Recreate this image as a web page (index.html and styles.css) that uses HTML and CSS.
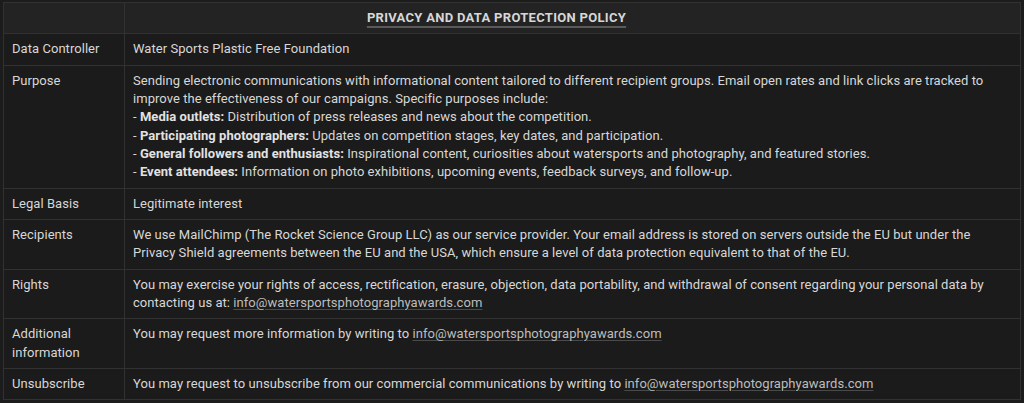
FILE: index.html
```html
<!DOCTYPE html>
<html lang="en">
<head>
<meta charset="utf-8">
<title>Privacy and Data Protection Policy</title>
<link rel="stylesheet" href="styles.css">
</head>
<body>
<table class="policy">
  <thead>
    <tr>
      <th class="label"></th>
      <th class="title"><span class="title-text">PRIVACY AND DATA PROTECTION POLICY</span></th>
    </tr>
  </thead>
  <tbody>
    <tr>
      <td class="label">Data Controller</td>
      <td>Water Sports Plastic Free Foundation</td>
    </tr>
    <tr>
      <td class="label">Purpose</td>
      <td>Sending electronic communications with informational content tailored to different recipient groups. Email open rates and link clicks are tracked to improve the effectiveness of our campaigns. Specific purposes include:<br>
      - <strong>Media outlets:</strong> Distribution of press releases and news about the competition.<br>
      - <strong>Participating photographers:</strong> Updates on competition stages, key dates, and participation.<br>
      - <strong>General followers and enthusiasts:</strong> Inspirational content, curiosities about watersports and photography, and featured stories.<br>
      - <strong>Event attendees:</strong> Information on photo exhibitions, upcoming events, feedback surveys, and follow-up.</td>
    </tr>
    <tr>
      <td class="label">Legal Basis</td>
      <td>Legitimate interest</td>
    </tr>
    <tr>
      <td class="label">Recipients</td>
      <td>We use MailChimp (The Rocket Science Group LLC) as our service provider. Your email address is stored on servers outside the EU but under the Privacy Shield agreements between the EU and the USA, which ensure a level of data protection equivalent to that of the EU.</td>
    </tr>
    <tr>
      <td class="label">Rights</td>
      <td>You may exercise your rights of access, rectification, erasure, objection, data portability, and withdrawal of consent regarding your personal data by contacting us at: <a href="#">info@watersportsphotographyawards.com</a></td>
    </tr>
    <tr>
      <td class="label">Additional information</td>
      <td>You may request more information by writing to <a href="#">info@watersportsphotographyawards.com</a></td>
    </tr>
    <tr>
      <td class="label">Unsubscribe</td>
      <td>You may request to unsubscribe from our commercial communications by writing to <a href="#">info@watersportsphotographyawards.com</a></td>
    </tr>
  </tbody>
</table>
</body>
</html>
```

FILE: styles.css
```css
html, body {
  background: #1c1c1c;
}
body {
  margin: 0;
  padding: 2px 3px;
  font-family: Roboto, "Liberation Sans", sans-serif;
  font-size: 13px;
  line-height: 1.41;
  letter-spacing: 0.05px;
  color: #d7d7d7;
}
.policy {
  width: 100%;
  border-collapse: collapse;
  background: #1b1b1b;
}
.policy th,
.policy td {
  border: 1px solid #313131;
  padding: 6px 8px;
  text-align: left;
  vertical-align: top;
  font-weight: normal;
}
.policy thead th {
  background: #232323;
}
.policy .label {
  width: 104px;
}
.policy .title {
  text-align: center;
  padding-right: 160px;
  font-weight: 700;
  letter-spacing: 0.3px;
}
.title-text {
  text-decoration: underline;
  text-decoration-color: #5a5a5a;
  text-decoration-thickness: 2px;
  text-underline-offset: 4px;
}
strong {
  font-weight: 700;
  color: #e2e2e2;
}
a {
  color: #bdbdbd;
  text-decoration: underline;
  text-decoration-color: #4a4a4a;
  text-underline-offset: 2px;
}
```
